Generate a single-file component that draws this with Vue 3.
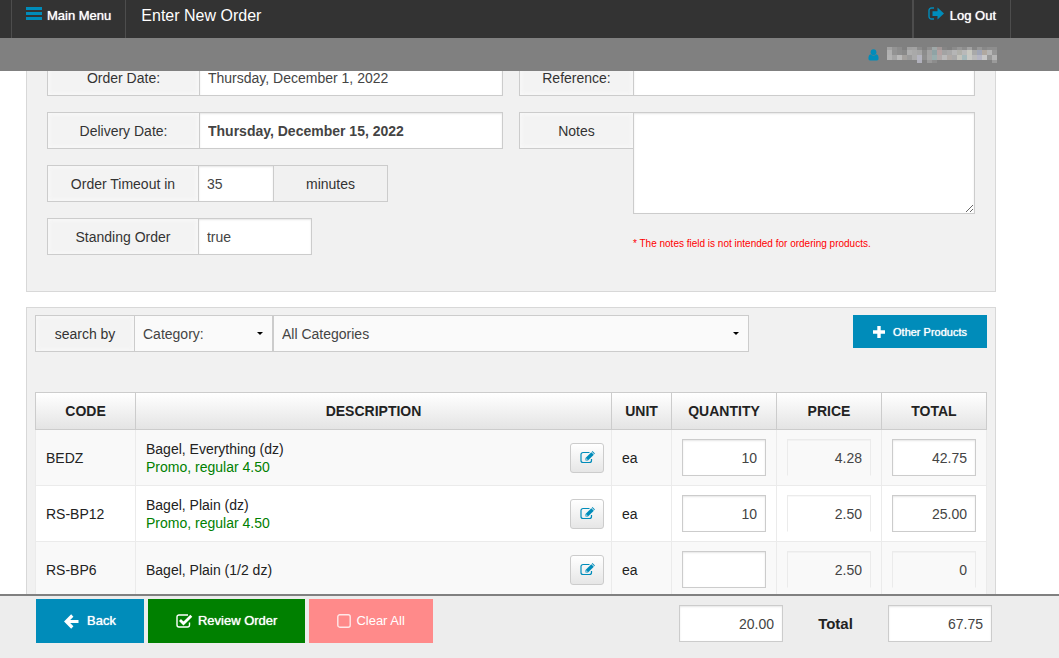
<script setup>
import { ref } from 'vue'

const mosaicRows = [
  { y: 0, h: 3, cells: ['#a3a3a3', '#949494', '#8c8c8c', '', '#a0a0a0', '#a2a2a2', '#8c8c8c', '', '#8e8e8e', '#9fa8a8', '#a39898', '#858585', '', '#8b8b8b', '#979797', '#8c8c8c', '#a2a2a2', '#858585', '#979797', '#888', '#8e8e8e', '#8e8e8e'] },
  { y: 3, h: 5, cells: ['#b0b0b0', '#939393', '#8e8e8e', '#898989', '#aeaeae', '#a9a9a9', '#a5a5a5', '#8c8c8c', '#a3a3a3', '#8fa3a5', '#b5a3a3', '#a3a3a3', '#a8a8a8', '#b5b5b5', '#b0b0aa', '#b9b9b9', '#c8c8c0', '#a9a9a9', '#a0a5b5', '#b0a8a0', '#b5b5b5', '#969696'] },
  { y: 8, h: 5, cells: ['#b3b3b3', '#a5a5a5', '#bababa', '#a4a19e', '#9b9b9b', '#aaa', '#b5b5c0', '#8f8f8f', '#a5a5a5', '#9aaeae', '#b0a9a9', '#bababa', '#b0aaa6', '#a9a9a9', '#c3c3bc', '#a5b8ba', '#c8c8c4', '#bababa', '#b5b5c3', '#c8c8c8', '#999', '#b4b4b4'] },
  { y: 13, h: 3, cells: ['', '', '', '', '', '', '#b0b0bb', '', '#999', '#8c8c8c', '', '', '', '', '', '', '', '', '', '', '', '#9a9a9a'] },
]

const mode = ref('Category:')
const category = ref('All Categories')
const notes = ref('')
const products = ref([
  { code: 'BEDZ', name: 'Bagel, Everything (dz)', promo: 'Promo, regular 4.50', qty: '10', price: '4.28', total: '42.75' },
  { code: 'RS-BP12', name: 'Bagel, Plain (dz)', promo: 'Promo, regular 4.50', qty: '10', price: '2.50', total: '25.00' },
  { code: 'RS-BP6', name: 'Bagel, Plain (1/2 dz)', promo: '', qty: '', price: '2.50', total: '0' },
])
</script>

<template>
  <div class="page">
    <header class="top">
      <nav class="bar">
        <a class="item menu" href="#">
          <svg width="16" height="14" viewBox="0 0 16 14"><path fill="#008cba" d="M0 0h16v3H0zM0 5h16v3H0zM0 10h16v3H0z" /></svg>
          Main Menu
        </a>
        <h1>Enter New Order</h1>
        <a class="item logout" href="#">
          <svg width="17" height="14" viewBox="0 0 17 14">
            <path d="M6 1H3.5A2.5 2.5 0 0 0 1 3.500v6A2.500 2.500 0 0 0 3.500 12H6" fill="none" stroke="#008cba" stroke-width="1.400" />
            <path d="M4.500 4.200h5V.6l6.500 6-6.500 6V9h-5z" fill="#008cba" />
          </svg>
          Log Out
        </a>
      </nav>
      <div class="userbar">
        <svg width="11" height="12" viewBox="0 0 11 12"><circle cx="5.500" cy="3.200" r="2.900" fill="#008cba" /><path fill="#008cba" d="M2.600 5.200Q5.500 7.800 8.400 5.200 10.600 5.800 10.600 9.500 10.600 11.500 9 11.500H2Q.4 11.500.4 9.500.4 5.800 2.600 5.200z" /></svg>
        <svg class="mosaic" width="110" height="16" viewBox="0 0 110 16" shape-rendering="crispEdges">
          <template v-for="line in mosaicRows" :key="line.y">
            <template v-for="(c, x) in line.cells" :key="x">
              <rect v-if="c" :x="x * 5" :y="line.y" width="5" :height="line.h" :fill="c" />
            </template>
          </template>
        </svg>
      </div>
    </header>

    <main>
      <section class="panel details">
        <div class="column">
          <div class="row">
            <label for="orderDate">Order Date:</label>
            <input id="orderDate" value="Thursday, December 1, 2022">
          </div>
          <div class="row">
            <label for="deliveryDate">Delivery Date:</label>
            <input id="deliveryDate" class="strong" value="Thursday, December 15, 2022">
          </div>
          <div class="row timeout">
            <label for="timeout">Order Timeout in</label>
            <input id="timeout" value="35">
            <span class="unit">minutes</span>
          </div>
          <div class="row standing">
            <label for="standing">Standing Order</label>
            <input id="standing" value="true">
          </div>
        </div>
        <div class="column right">
          <div class="row">
            <label for="reference">Reference:</label>
            <input id="reference">
          </div>
          <div class="row">
            <label for="notes">Notes</label>
            <textarea id="notes" v-model="notes"></textarea>
          </div>
          <p class="hint">* The notes field is not intended for ordering products.</p>
        </div>
      </section>

      <section class="panel order">
        <div class="tools">
          <div class="search">
            <label for="mode">search by</label>
            <div class="pick">
              <select id="mode" v-model="mode"><option>Category:</option></select>
              <svg width="6" height="3" viewBox="0 0 6 3"><path d="M0 0h6L3 3z" /></svg>
            </div>
            <div class="pick">
              <select v-model="category" aria-label="Category"><option>All Categories</option></select>
              <svg width="6" height="3" viewBox="0 0 6 3"><path d="M0 0h6L3 3z" /></svg>
            </div>
          </div>
          <button class="other" type="button">
            <svg width="12" height="12" viewBox="0 0 12 12"><path fill="#fff" d="M4.300 0h3.400v4.300H12v3.400H7.700V12H4.300V7.700H0V4.300h4.300z" /></svg>
            Other Products
          </button>
        </div>

        <table>
          <colgroup><col class="c-code"><col><col class="c-unit"><col class="c-num"><col class="c-num"><col class="c-last"></colgroup>
          <thead>
            <tr><th>CODE</th><th>DESCRIPTION</th><th>UNIT</th><th>QUANTITY</th><th>PRICE</th><th>TOTAL</th></tr>
          </thead>
          <tbody>
            <tr v-for="p in products" :key="p.code">
              <td>{{ p.code }}</td>
              <td class="desc">
                <div class="product">
                  <div>{{ p.name }}<div v-if="p.promo" class="promo">{{ p.promo }}</div></div>
                  <button class="edit" type="button" :aria-label="'Edit ' + p.name">
                    <svg width="15" height="13" viewBox="0 0 15 13">
                      <path d="M9.500 1.500H3A2 2 0 0 0 1 3.500v6A2 2 0 0 0 3 11.500h6.500a2 2 0 0 0 2-2V8" fill="none" stroke="#008cba" stroke-width="1.200" />
                      <path d="M5.500 9.500V7L11.300 1.200l2.500 2.500L8 9.500z" fill="#008cba" />
                      <path d="M11.800.7 12.500.1 14.900 2.500 14.300 3.200z" fill="#008cba" />
                      <path d="M6.300 7.300v1.400h1.400z" fill="#fff" />
                    </svg>
                  </button>
                </div>
              </td>
              <td>ea</td>
              <td><input v-model="p.qty" class="num" :aria-label="'Quantity ' + p.code"></td>
              <td><input v-model="p.price" class="num flat" readonly :aria-label="'Price ' + p.code"></td>
              <td><input v-model="p.total" class="num" :class="{ flat: p.total === '0' }" readonly :aria-label="'Total ' + p.code"></td>
            </tr>
          </tbody>
        </table>
      </section>
    </main>

    <footer>
      <button class="action back" type="button">
        <svg width="15" height="15" viewBox="0 0 15 15"><path d="M8.300 1.500 2.300 7.500l6 6M3 7.500h11.500" fill="none" stroke="#fff" stroke-width="3.200" /></svg>
        Back
      </button>
      <button class="action review" type="button">
        <svg width="17" height="14" viewBox="0 0 17 14">
          <path d="M12 1H3a2 2 0 0 0-2 2v8a2 2 0 0 0 2 2h8.500a2 2 0 0 0 2-2V8.500" fill="none" stroke="#fff" stroke-width="1.400" />
          <path d="M4 6l3.500 3.500L15.300 1.800" fill="none" stroke="#fff" stroke-width="2.800" />
        </svg>
        Review Order
      </button>
      <button class="action clear" type="button">
        <svg width="14" height="14" viewBox="0 0 14 14"><rect x=".8" y=".8" width="12.400" height="12.400" rx="2" fill="none" stroke="#ffe8e8" stroke-width="1.400" /></svg>
        Clear All
      </button>
      <div class="sums">
        <input class="num" value="20.00" readonly aria-label="Total quantity">
        <label for="grandTotal">Total</label>
        <input id="grandTotal" class="num" value="67.75" readonly>
      </div>
    </footer>
  </div>
</template>

<style>
body { margin: 0; background: #fff; }
</style>

<style scoped>
.page, .page * { box-sizing: border-box; }
.page { height: 100vh; overflow: hidden; font: 14px/18px "Liberation Sans", Arial, sans-serif; color: #222; }
svg { display: block; flex: none; }
button, input, select, textarea { font: inherit; border-radius: 0; margin: 0; }
input, textarea, select { color: #444; border: 1px solid #ccc; background: #fff; padding: 0 8px; outline: 0; min-width: 0; width: 100%; }
input { height: 37px; box-shadow: inset 0 1px 2px rgba(0, 0, 0, .1); }

.top { position: fixed; top: 0; left: 0; right: 0; z-index: 2; }
.bar { display: flex; height: 38px; background: #333; padding: 0 48px 0 11px; }
.item { display: flex; gap: 5px; padding: 7px 14px 0; border: solid #4d4d4d; border-width: 0 1px; color: #fff; text-decoration: none; font-size: 13px; line-height: 18px; text-shadow: 0 0 1px #fff; }
.logout { border-left-width: 2px; }
h1 { flex: 1; margin: 0; padding: 7px 15px; font-size: 16px; line-height: 18px; font-weight: 400; color: #fff; }
.userbar { display: flex; justify-content: flex-end; align-items: center; gap: 8px; height: 33px; background: #808080; padding-right: 62px; }

main { padding: 40px 63px 0 26px; }
.panel { border: 1px solid #d8d8d8; background: #f1f1f1; }
.details { display: grid; grid-template-columns: 1fr 1fr; gap: 16px; padding: 18px 20px 36px; margin-bottom: 15px; }
.column { display: flex; flex-direction: column; gap: 16px; }
.row { display: grid; grid-template-columns: 1fr 2fr; align-items: start; }
.row label, .unit, .search label { height: 37px; line-height: 36px; text-align: center; border: 1px solid #ccc; border-right: 0; background: #f3f3f3; color: #333; box-shadow: inset 0 0 4px 1px #f9f9f9; }
.right .row { grid-template-columns: 1fr 3fr; }
.row.timeout { grid-template-columns: calc(33.3333% - 1px) 16.6667% 25%; }
.row.standing { grid-template-columns: calc(33.3333% - 1px) 25%; }
.unit { border-right: 1px solid #ccc; background: #f1f1f1; box-shadow: none; margin-left: -1px; }
.strong { font-weight: 700; }
textarea { display: block; height: 102px; box-shadow: inset 0 1px 2px rgba(0, 0, 0, .1); resize: vertical; }
.hint { margin: 5px 0 0 25%; font-size: 10px; line-height: 18px; color: #f00; }

.order { padding: 7px 8px 60px; }
.tools { display: flex; justify-content: space-between; align-items: flex-start; margin-bottom: 40px; }
.search { display: grid; grid-template-columns: 99px 139px 1fr; width: 75%; }
.pick { position: relative; }
.pick select { display: block; height: 37px; appearance: none; background: #fafafa; }
.pick svg { position: absolute; right: 10px; top: 17px; pointer-events: none; }
.other { display: flex; align-items: center; gap: 8px; height: 33px; padding: 0 20px; border: 0; background: #008cba; color: #fff; font-size: 11px; line-height: 18px; text-shadow: 0 0 1px #fff; }

table { width: 100%; table-layout: fixed; border-collapse: separate; border-spacing: 0; background: #fff; }
.c-code { width: 100px; }
.c-unit { width: 60px; }
.c-num { width: 105px; }
.c-last { width: 106px; }
th { height: 38px; padding: 0; border: solid #ccc; border-width: 1px 0 1px 1px; background: linear-gradient(#fff, #e4e4e4); font-weight: 700; }
th:last-child { border-right-width: 1px; }
td { padding: 9px 10px; border: solid #ebebeb; border-width: 0 0 1px 1px; height: 56px; }
td:last-child { border-right-width: 1px; }
tbody tr:nth-child(odd) { background: #f9f9f9; }
.desc { padding: 0 7px 0 10px; }
.product { display: flex; justify-content: space-between; align-items: center; }
.promo { color: #008000; }
.edit { display: flex; align-items: center; justify-content: center; width: 34px; height: 30px; padding: 0; border: 1px solid #ccc; border-radius: 3px; background: linear-gradient(#fff, #e6e6e6); }
.num { display: block; text-align: right; }
.flat { background: transparent; border-color: #ebebeb; border-bottom-color: transparent; box-shadow: inset 0 1px 1px rgba(0, 0, 0, .03); }

footer { position: fixed; left: 0; right: 0; bottom: 0; z-index: 2; display: flex; align-items: flex-start; gap: 4px; padding: 3px 67px 15px 36px; border-top: 2px solid #808080; background: #ededed; }
.action { display: flex; align-items: center; gap: 5px; height: 44px; padding: 0 28px; border: 0; color: #fff; font-size: 13px; line-height: 18px; text-shadow: 0 0 1px #fff; }
.back { background: #008cba; gap: 8px; }
.review { background: #008000; }
.clear { background: #ff8a8a; text-shadow: none; }
.sums { display: flex; align-items: center; margin-left: auto; padding-top: 6px; }
.sums input { width: 104px; }
.sums label { width: 105px; text-align: center; font-size: 15px; font-weight: 700; }
</style>
